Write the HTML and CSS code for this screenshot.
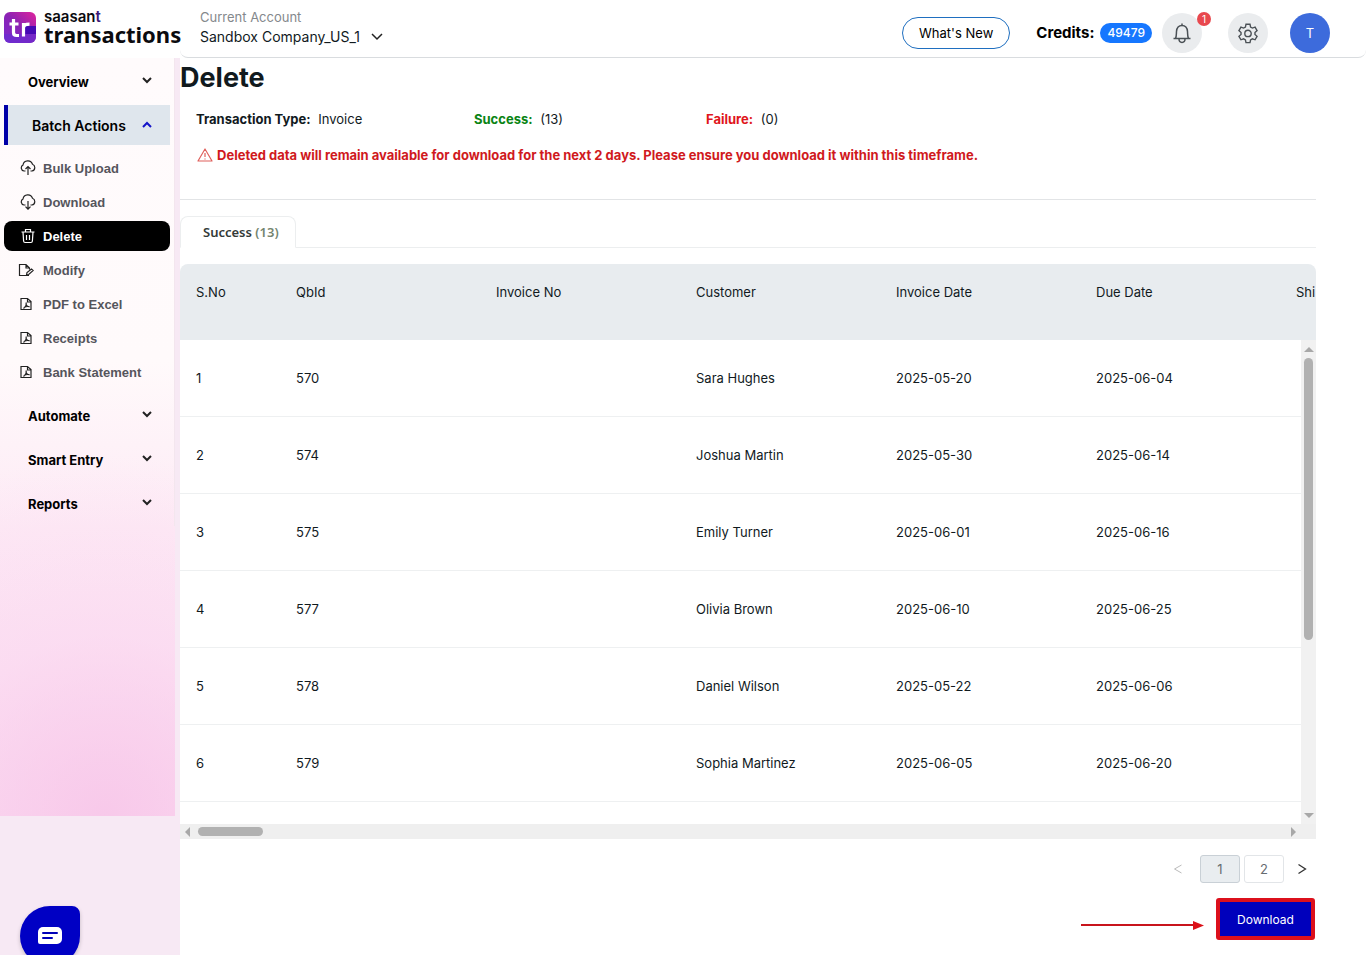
FILE: index.html
```html
<!DOCTYPE html>
<html lang="en">
<head>
  <meta charset="UTF-8">
  <meta name="viewport" content="width=device-width, initial-scale=1.0">
  <title>Delete - SaasAnt Transactions</title>
  <link rel="stylesheet" href="styles.css">
</head>
<body>
  <aside class="sidebar">
    <a class="brand" href="#">
      <svg class="brand-logo" viewBox="0 0 32 32" aria-hidden="true">
        <defs>
          <linearGradient id="logoBg" x1="0" y1="1" x2="1" y2="0">
            <stop offset="0" stop-color="#7a2bd0"/>
            <stop offset="0.5" stop-color="#8a22b4"/>
            <stop offset="1" stop-color="#e0249c"/>
          </linearGradient>
        </defs>
        <rect width="32" height="31" rx="6" fill="url(#logoBg)"/>
        <path d="M19 14h13v8H19z" fill="#4609b4"/>
        <path d="M0 22h32v3a6 6 0 0 1-6 6H6a6 6 0 0 1-6-6z" fill="#6a2cd0" opacity="0.7"/>
        <path d="M9.500 7v13.500q0 3 3 3h2.500M5.500 12h9M19.500 24.500V11M19.500 16q0-3.800 6-3.800" fill="none" stroke="#fff" stroke-width="3.200"/>
      </svg>
      <span class="brand-text">
        <span class="brand-small">saasan<span class="brand-t">t</span></span>
        <span class="brand-big">transactions</span>
      </span>
    </a>
    <nav class="nav">
      <div class="nav-inner">
        <button class="nav-group" type="button">Overview
          <svg class="caret" viewBox="0 0 10 10"><path d="M1 3l4 4 4-4"/></svg>
        </button>
        <button class="nav-group open" type="button">Batch Actions
          <svg class="caret" viewBox="0 0 10 10"><path d="M1 7l4-4 4 4"/></svg>
        </button>
        <ul class="nav-list">
          <li><a class="nav-item" href="#">
            <svg class="nav-icon" viewBox="0 0 16 16"><path d="M5.500 11H4A3.200 3.200 0 0 1 3 5 4.900 4.900 0 0 1 12.500 4.300 3.500 3.500 0 0 1 12 11h-1.500M8 15V7M5.500 9L8 6.500 10.500 9"/></svg>
            Bulk Upload</a></li>
          <li><a class="nav-item" href="#">
            <svg class="nav-icon" viewBox="0 0 16 16"><path d="M5.500 11H4A3.200 3.200 0 0 1 3 5 4.900 4.900 0 0 1 12.500 4.300 3.500 3.500 0 0 1 12 11h-1.500M8 7v8M5.500 12.700L8 15.200l2.500-2.500"/></svg>
            Download</a></li>
          <li><a class="nav-item active" href="#">
            <svg class="nav-icon" viewBox="0 0 16 16"><path d="M1.500 4h13M3 4l.6 9q.1 1.500 1.500 1.500h5.800q1.400 0 1.500-1.500L13 4M5.500 4V1.500h5V4M6.500 7v5M9.500 7v5"/></svg>
            Delete</a></li>
          <li><a class="nav-item" href="#">
            <svg class="nav-icon file" viewBox="0 0 16 16"><path d="M11 13.500H1.500V2.500H8L11.500 6v1.500M8 2.500V6h3.500M8.500 13l.5-2.500 4.500-3.500 1.700 1.500-4.500 4z"/></svg>
            Modify</a></li>
          <li><a class="nav-item" href="#">
            <svg class="nav-icon file" viewBox="0 0 16 16"><path d="M3 2.500h6.500l3.500 3v8H3zM9.500 2.500V6H13M5.500 12.500C8 10.500 8.500 8 8 6.500M8 8.500q1 2 3.500 2.500M6 11.500q2.500-1.500 5.500-.8"/></svg>
            PDF to Excel</a></li>
          <li><a class="nav-item" href="#">
            <svg class="nav-icon file" viewBox="0 0 16 16"><path d="M3 2.500h6.500l3.500 3v8H3zM9.500 2.500V6H13M5.500 12.500C8 10.500 8.500 8 8 6.500M8 8.500q1 2 3.500 2.500M6 11.500q2.500-1.500 5.500-.8"/></svg>
            Receipts</a></li>
          <li><a class="nav-item" href="#">
            <svg class="nav-icon file" viewBox="0 0 16 16"><path d="M3 2.500h6.500l3.500 3v8H3zM9.500 2.500V6H13M5.500 12.500C8 10.500 8.500 8 8 6.500M8 8.500q1 2 3.500 2.500M6 11.500q2.500-1.500 5.500-.8"/></svg>
            Bank Statement</a></li>
        </ul>
        <button class="nav-group" type="button">Automate
          <svg class="caret" viewBox="0 0 10 10"><path d="M1 3l4 4 4-4"/></svg>
        </button>
        <button class="nav-group" type="button">Smart Entry
          <svg class="caret" viewBox="0 0 10 10"><path d="M1 3l4 4 4-4"/></svg>
        </button>
        <button class="nav-group" type="button">Reports
          <svg class="caret" viewBox="0 0 10 10"><path d="M1 3l4 4 4-4"/></svg>
        </button>
      </div>
    </nav>
  </aside>

  <div class="page">
    <header class="topbar">
      <div class="account">
        <label for="account">Current Account</label>
        <div class="account-select">
          <select id="account">
            <option>Sandbox Company_US_1</option>
          </select>
          <svg class="account-caret" viewBox="0 0 12 8"><path d="M1 1l5 5 5-5"/></svg>
        </div>
      </div>
      <button class="whats-new" type="button">What's New</button>
      <div class="credits">Credits: <span class="credits-badge">49479</span></div>
      <button class="round-btn bell" type="button" aria-label="Notifications">
        <svg viewBox="0 0 20 22"><path d="M1.500 16.500h17M3.500 16.500c1-2 .8-4 1-7C4.800 5.500 7 3.500 10 3.500s5.200 2 5.500 6c.2 3 0 5 1 7M10 3.500V1.500M7 17c0 4.500 6 4.500 6 0"/></svg>
        <span class="bell-count">1</span>
      </button>
      <button class="round-btn gear" type="button" aria-label="Settings">
        <svg viewBox="0 0 24 24"><path d="M9.800 2.500h4.400l.6 3 2 1.100 2.900-1 2.200 3.800-2.300 2v2.200l2.300 2-2.200 3.800-2.900-1-2 1.100-.6 3H9.800l-.6-3-2-1.100-2.900 1-2.200-3.800 2.300-2v-2.200l-2.300-2 2.200-3.800 2.900 1 2-1.100zM15.500 12.500a3.500 3.500 0 1 0-7 0 3.500 3.500 0 0 0 7 0z"/></svg>
      </button>
      <button class="avatar" type="button">T</button>
    </header>

    <main class="content">
      <h1>Delete</h1>
      <div class="summary">
        <div><b>Transaction Type:</b> Invoice</div>
        <div class="ok"><b>Success:</b> (13)</div>
        <div class="fail"><b>Failure:</b> (0)</div>
      </div>
      <p class="warning">
        <svg viewBox="0 0 16 16"><path d="M8 2L1 14h14zM8 6v4M8 11.500v1"/></svg>
        Deleted data will remain available for download for the next 2 days. Please ensure you download it within this timeframe.
      </p>

      <div class="tabs">
        <button class="tab" type="button">Success <span>(13)</span></button>
      </div>

      <div class="table-box">
        <table>
          <colgroup>
            <col class="col-no">
            <col span="6" class="col-data">
          </colgroup>
          <thead>
            <tr>
              <th>S.No</th>
              <th>QbId</th>
              <th>Invoice No</th>
              <th>Customer</th>
              <th>Invoice Date</th>
              <th>Due Date</th>
              <th>Shi</th>
            </tr>
          </thead>
          <tbody>
            <tr><td>1</td><td>570</td><td></td><td>Sara Hughes</td><td>2025-05-20</td><td>2025-06-04</td><td></td></tr>
            <tr><td>2</td><td>574</td><td></td><td>Joshua Martin</td><td>2025-05-30</td><td>2025-06-14</td><td></td></tr>
            <tr><td>3</td><td>575</td><td></td><td>Emily Turner</td><td>2025-06-01</td><td>2025-06-16</td><td></td></tr>
            <tr><td>4</td><td>577</td><td></td><td>Olivia Brown</td><td>2025-06-10</td><td>2025-06-25</td><td></td></tr>
            <tr><td>5</td><td>578</td><td></td><td>Daniel Wilson</td><td>2025-05-22</td><td>2025-06-06</td><td></td></tr>
            <tr><td>6</td><td>579</td><td></td><td>Sophia Martinez</td><td>2025-06-05</td><td>2025-06-20</td><td></td></tr>
          </tbody>
        </table>
        <div class="scroll-y">
          <span class="arrow up"></span>
          <span class="thumb"></span>
          <span class="arrow down"></span>
        </div>
        <div class="scroll-x">
          <span class="arrow left"></span>
          <span class="thumb"></span>
          <span class="arrow right"></span>
        </div>
      </div>

      <div class="pagination">
        <button class="page-arrow prev" type="button" aria-label="Previous page" disabled>
          <svg viewBox="0 0 10 12"><path d="M8.500 2L1.500 6l7 4"/></svg>
        </button>
        <button class="page-num current" type="button">1</button>
        <button class="page-num" type="button">2</button>
        <button class="page-arrow" type="button" aria-label="Next page">
          <svg viewBox="0 0 10 12"><path d="M1.500 1.500L8.500 6l-7 4.500"/></svg>
        </button>
      </div>

      <div class="actions">
        <svg class="pointer" viewBox="0 0 124 10"><path d="M1 5h113" stroke="#c8141c" stroke-width="2"/><path d="M113 1l11 4.500-11 4.500z" fill="#dc1018"/></svg>
        <button class="download" type="button">Download</button>
      </div>
    </main>
  </div>

  <button class="chat" type="button" aria-label="Open chat">
    <svg viewBox="0 0 24 18"><path d="M5 0h14a5 5 0 0 1 5 5v7a5 5 0 0 1-5 5H2a2 2 0 0 1-2-2V5a5 5 0 0 1 5-5z" fill="#fff"/><path d="M5 6h14M5 11h9" stroke="#0000b8" stroke-width="2" stroke-linecap="round"/></svg>
  </button>
</body>
</html>
```
FILE: styles.css
```css
* {
  box-sizing: border-box;
}

body {
  margin: 0;
  min-height: 100vh;
  display: flex;
  font-family: Inter, "Liberation Sans", sans-serif;
  font-size: 13px;
  color: #111a1e;
  background: #fff;
  overflow: hidden;
}

button,
select {
  font: inherit;
  color: inherit;
  background: none;
  border: none;
  margin: 0;
  padding: 0;
  cursor: pointer;
}

a {
  color: inherit;
  text-decoration: none;
}

svg {
  display: block;
  flex: none;
}

/* sidebar */
.sidebar {
  width: 180px;
  flex: none;
  display: flex;
  flex-direction: column;
  background: #f7e9f4;
}

.brand {
  height: 58px;
  padding: 0 0 2px 4px;
  display: flex;
  align-items: center;
  gap: 8px;
  background: #fff;
}

.brand-logo {
  width: 32px;
  height: 32px;
}

.brand-text {
  display: flex;
  flex-direction: column;
  padding-bottom: 3px;
  color: #0b0b0f;
}

.brand-small {
  font-size: 15px;
  line-height: 15px;
  font-weight: 600;
}

.brand-t {
  color: #3b1a78;
}

.brand-big {
  font-family: "Noto Sans", sans-serif;
  font-size: 22px;
  line-height: 20px;
  font-weight: 700;
}

.nav {
  flex: 1;
  margin: 0 5px 139px 0;
  background:
    radial-gradient(circle at 60% 100%, rgba(247, 196, 232, 0.8), rgba(250, 208, 238, 0.4) 180px, transparent 360px),
    linear-gradient(#fffbfc 0%, #fffafb 40%, #fdeaf5 62%, #fbdcf1 100%);
}

.nav-inner {
  padding: 2px 4px 0;
  border-right: 1px solid #f3e6ee;
}

.nav-group {
  width: 100%;
  height: 44px;
  padding: 0 18px 0 24px;
  display: flex;
  align-items: center;
  justify-content: space-between;
  font-weight: 700;
  color: #000;
}

.nav-group.open {
  height: 40px;
  margin-top: 1px;
  border-left: 4px solid #0000a8;
  background: #dfe6ed;
  font-size: 14px;
  font-weight: 600;
}

.caret {
  width: 10px;
  height: 10px;
  margin-bottom: 4px;
  fill: none;
  stroke: #222;
  stroke-width: 2;
}

.open .caret {
  margin-bottom: 0;
  stroke: #1414c8;
}

.nav-list {
  list-style: none;
  margin: 0;
  padding: 8px 0 7px;
  display: flex;
  flex-direction: column;
  gap: 4px;
}

.nav-item {
  height: 30px;
  padding-left: 16px;
  display: flex;
  align-items: center;
  gap: 7px;
  border-radius: 8px;
  font-family: "Liberation Sans", Arial, sans-serif;
  font-weight: 700;
  color: #55555c;
}

.nav-item.active {
  background: #000;
  color: #fff;
}

.nav-icon {
  width: 16px;
  height: 16px;
  fill: none;
  stroke: #222;
  stroke-width: 1.2;
}

.nav-icon.file {
  margin: 0 2px 0 -2px;
}

.active .nav-icon {
  stroke: #fff;
}

/* top bar */
.page {
  flex: 1;
  min-width: 0;
  display: flex;
  flex-direction: column;
}

.topbar {
  height: 58px;
  padding: 8px 36px 0 20px;
  display: flex;
  align-items: center;
  border-bottom: 1px solid #d9dcdf;
  border-radius: 0 0 8px 8px;
}

.account {
  flex: 1;
  align-self: flex-start;
  display: flex;
  flex-direction: column;
}

.account label {
  line-height: 19px;
  color: #84888c;
}

.account-select {
  display: flex;
  align-items: center;
  gap: 10px;
}

.account select {
  appearance: none;
  font-size: 14px;
  line-height: 19px;
}

.account-caret {
  width: 12px;
  height: 8px;
  fill: none;
  stroke: #222;
  stroke-width: 1.5;
}

.whats-new {
  height: 32px;
  padding: 0 16px;
  margin-right: 26px;
  border: 1px solid #1f6fc0;
  border-radius: 16px;
  color: #000;
}

.credits {
  display: flex;
  align-items: center;
  gap: 6px;
  margin-right: 10px;
  font-size: 15px;
  font-weight: 700;
  color: #000;
}

.credits-badge {
  padding: 0 7px;
  border-radius: 10px;
  line-height: 20px;
  font-size: 12px;
  font-weight: 500;
  color: #fff;
  background: #1677ff;
}

.round-btn,
.avatar {
  width: 40px;
  height: 40px;
  border-radius: 50%;
  display: flex;
  align-items: center;
  justify-content: center;
  background: #eaecee;
}

.round-btn svg {
  width: 22px;
  height: 22px;
  fill: none;
  stroke: #4a5055;
  stroke-width: 1.5;
}

.bell {
  position: relative;
  margin-right: 26px;
}

.bell-count {
  position: absolute;
  top: -1px;
  right: -9px;
  width: 14px;
  height: 14px;
  border-radius: 50%;
  line-height: 14px;
  font-size: 10px;
  color: #fff;
  background: #e8484e;
}

.gear {
  margin-right: 22px;
}

.avatar {
  background: #3d6bdc;
  color: #fff;
}

/* content */
.content {
  padding: 0 50px 0 0;
  display: flex;
  flex-direction: column;
}

h1 {
  margin: 0;
  font-size: 27px;
  line-height: 40px;
  font-weight: 700;
}

.summary {
  padding: 11px 16px 0;
  display: grid;
  grid-template-columns: 278px 232px 1fr;
  line-height: 20px;
}

.summary b {
  margin-right: 4px;
  font-weight: 700;
}

.ok b {
  color: #0a8414;
}

.fail b {
  color: #e0161c;
}

.warning {
  margin: 0;
  padding: 16px 16px 34px 17px;
  display: flex;
  align-items: center;
  gap: 4px;
  line-height: 20px;
  font-weight: 700;
  color: #d0191d;
  border-bottom: 1px solid #e2e4e6;
}

.warning svg {
  width: 16px;
  height: 16px;
  fill: none;
  stroke: #e0605c;
  stroke-width: 1.2;
  stroke-linejoin: round;
}

.tabs {
  margin: 16px 0;
  display: flex;
  border-bottom: 1px solid #eceeef;
}

.tab {
  height: 32px;
  padding: 0 16px 0 22px;
  margin-bottom: -1px;
  border: 1px solid #eceeef;
  border-bottom-color: #fff;
  border-radius: 8px 8px 0 0;
  font-family: "Noto Sans", sans-serif;
  font-weight: 600;
  color: #333a38;
  background: #fff;
}

.tab span {
  color: #74856f;
}

/* table */
.table-box {
  position: relative;
  overflow: hidden;
  border-radius: 8px 8px 0 0;
}

table {
  width: 1300px;
  table-layout: fixed;
  border-collapse: separate;
  border-spacing: 0;
  margin-bottom: 22px;
}

.col-no {
  width: 100px;
}

.col-data {
  width: 200px;
}

th,
td {
  height: 77px;
  padding: 0 16px;
  text-align: left;
  font-weight: 400;
  border-bottom: 1px solid #eef0f1;
}

th {
  height: 76px;
  padding-bottom: 20px;
  border-bottom: none;
  background: #e8ecef;
}

.scroll-y {
  position: absolute;
  top: 76px;
  right: 0;
  bottom: 15px;
  width: 15px;
  padding: 7px 0 6px;
  display: flex;
  flex-direction: column;
  align-items: center;
  background: #f1f1f1;
}

.scroll-x {
  height: 15px;
  padding: 0 20px 0 5px;
  display: flex;
  align-items: center;
  background: #efefef;
}

.thumb {
  border-radius: 5px;
  background: #b1b1b1;
}

.scroll-y .thumb {
  width: 9px;
  height: 282px;
  margin: 6px 0 auto;
}

.scroll-x .thumb {
  width: 65px;
  height: 9px;
  margin: 0 auto 0 8px;
}

.arrow {
  border: 5px solid transparent;
}

.arrow.up {
  border-top: none;
  border-bottom-color: #a8a8a8;
}

.arrow.down {
  border-bottom: none;
  border-top-color: #a8a8a8;
}

.arrow.left {
  border-left: none;
  border-right-color: #a8a8a8;
}

.arrow.right {
  border-right: none;
  border-left-color: #a8a8a8;
}

/* pagination */
.pagination {
  margin: 16px 0 15px;
  display: flex;
  justify-content: flex-end;
  gap: 4px;
}

.page-arrow {
  width: 28px;
  height: 28px;
  display: flex;
  align-items: center;
  justify-content: center;
}

.page-arrow.prev {
  margin-right: 4px;
}

.page-arrow svg {
  width: 10px;
  height: 12px;
  fill: none;
  stroke: #333;
  stroke-width: 1.3;
}

.page-arrow.prev svg {
  stroke: #bbb;
  stroke-width: 1;
}

.page-num {
  width: 40px;
  height: 28px;
  border: 1px solid #e2e5e8;
  border-radius: 3px;
  color: #666c70;
}

.page-num.current {
  border-color: #c9d0d6;
  background: #e9edf0;
}

.actions {
  display: flex;
  justify-content: flex-end;
  align-items: center;
  gap: 12px;
}

.pointer {
  width: 124px;
  height: 10px;
  margin-top: 12px;
}

.download {
  width: 99px;
  height: 42px;
  margin-right: 1px;
  border: 4px solid #dc101c;
  border-radius: 3px;
  font-size: 12px;
  color: #fff;
  background: #0000bc;
}

/* chat widget */
.chat {
  position: fixed;
  left: 20px;
  bottom: -11px;
  width: 60px;
  height: 60px;
  display: flex;
  align-items: center;
  justify-content: center;
  border-radius: 50% 8px 50% 50%;
  background: #0000c4;
  box-shadow: 0 2px 4px rgba(0, 0, 0, 0.2);
}

.chat svg {
  width: 24px;
  height: 18px;
}
```
